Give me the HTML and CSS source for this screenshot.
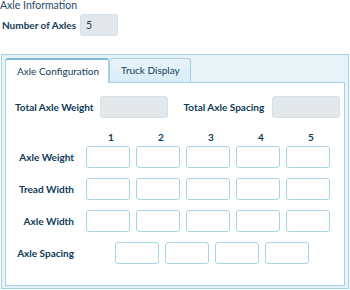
FILE: index.html
```html
<!doctype html>
<html lang="en">
  <head>
    <meta charset="UTF-8" />
    <title>Axle Information</title>
    <link rel="stylesheet" href="styles.css">
  </head>
  <body>
    <div class="page-title">Axle Information</div>
    <div class="axle-count">
      <label>Number of Axles</label>
      <input class="field field-readonly count-field" type="text" value="5" readonly />
    </div>

    <div class="tab-box">
      <div class="tab-strip">
        <div class="tab tab-active">Axle Configuration</div>
        <div class="tab">Truck Display</div>
      </div>
      <div class="tab-panel">
        <div class="totals">
          <label class="weight-label">Total Axle Weight</label>
          <input class="field field-readonly total-field" type="text" readonly />
          <label class="spacing-label">Total Axle Spacing</label>
          <input class="field field-readonly total-field" type="text" readonly />
        </div>

        <div class="col-heads">
          <span></span>
          <span>1</span>
          <span>2</span>
          <span>3</span>
          <span>4</span>
          <span>5</span>
        </div>

        <div class="axle-grid">
          <label>Axle Weight</label>
          <input class="field" type="text" />
          <input class="field" type="text" />
          <input class="field" type="text" />
          <input class="field" type="text" />
          <input class="field" type="text" />

          <label>Tread Width</label>
          <input class="field" type="text" />
          <input class="field" type="text" />
          <input class="field" type="text" />
          <input class="field" type="text" />
          <input class="field" type="text" />

          <label>Axle Width</label>
          <input class="field" type="text" />
          <input class="field" type="text" />
          <input class="field" type="text" />
          <input class="field" type="text" />
          <input class="field" type="text" />

          <label>Axle Spacing</label>
          <div class="spacing-row">
            <input class="field" type="text" />
            <input class="field" type="text" />
            <input class="field" type="text" />
            <input class="field" type="text" />
          </div>
        </div>
      </div>
    </div>
  </body>
</html>
```

FILE: styles.css
```css
body {
  margin: 0;
  font-family: Lato, "Liberation Sans", sans-serif;
  font-size: 10px;
  color: #0d3a58;
  background: #ffffff;
}

label {
  font-weight: bold;
  white-space: nowrap;
  flex-shrink: 0;
}

.page-title {
  height: 12px;
  line-height: 10px;
  color: #1f4864;
  font-size: 10.5px;
  white-space: nowrap;
}

.axle-count {
  display: flex;
  align-items: center;
  gap: 4px;
  margin-top: 2px;
  padding-left: 2px;
}

.field {
  box-sizing: border-box;
  width: 44px;
  height: 22px;
  margin: 0;
  padding: 0 5px;
  border: 1px solid #a9d3e6;
  border-radius: 3px;
  background: #ffffff;
  font-family: inherit;
  font-size: 10.5px;
  color: #1f4864;
  outline: none;
  flex-shrink: 0;
}

.field-readonly {
  background: #e1e7ea;
  border-color: #d3e3ea;
}

.count-field {
  width: 38px;
}

.tab-box {
  margin: 18px 1px 0 1px;
  padding: 3px 3px 2px 3px;
  border: 1px solid #a6d1e4;
  background: #e8f3f9;
}

.tab-strip {
  display: flex;
  height: 24px;
}

.tab {
  box-sizing: border-box;
  height: 24px;
  padding: 0 10px 0 11px;
  line-height: 22px;
  border: 1px solid #a6d1e4;
  border-bottom: none;
  border-radius: 3px 3px 0 0;
  background: linear-gradient(#e9f4fa, #d9ecf6);
  color: #123c5a;
  white-space: nowrap;
}

.tab-active {
  position: relative;
  z-index: 1;
  height: 25px;
  padding: 0 9px 0 11px;
  border-top: 2px solid #7db8d6;
  background: #ffffff;
}

.tab-panel {
  height: 202px;
  border: 1px solid #a6d1e4;
  background: #ffffff;
}

.totals {
  display: flex;
  align-items: center;
  margin-top: 13px;
  padding-left: 9px;
}

.total-field {
  width: 68px;
}

.weight-label {
  margin-right: 6px;
}

.spacing-label {
  margin: 0 8px 0 16px;
}

.col-heads {
  display: grid;
  grid-template-columns: 80px repeat(5, 50px);
  margin-top: 12px;
  height: 14px;
  line-height: 14px;
  font-weight: bold;
  text-align: center;
}

.axle-grid {
  display: grid;
  grid-template-columns: 80px repeat(5, 50px);
  grid-auto-rows: 22px;
  row-gap: 10px;
  align-items: center;
  margin-top: 2px;
}

.axle-grid label {
  padding-right: 12px;
  text-align: right;
}

.spacing-row {
  grid-column: 2 / span 5;
  display: flex;
  gap: 6px;
  padding-left: 29px;
}
```
